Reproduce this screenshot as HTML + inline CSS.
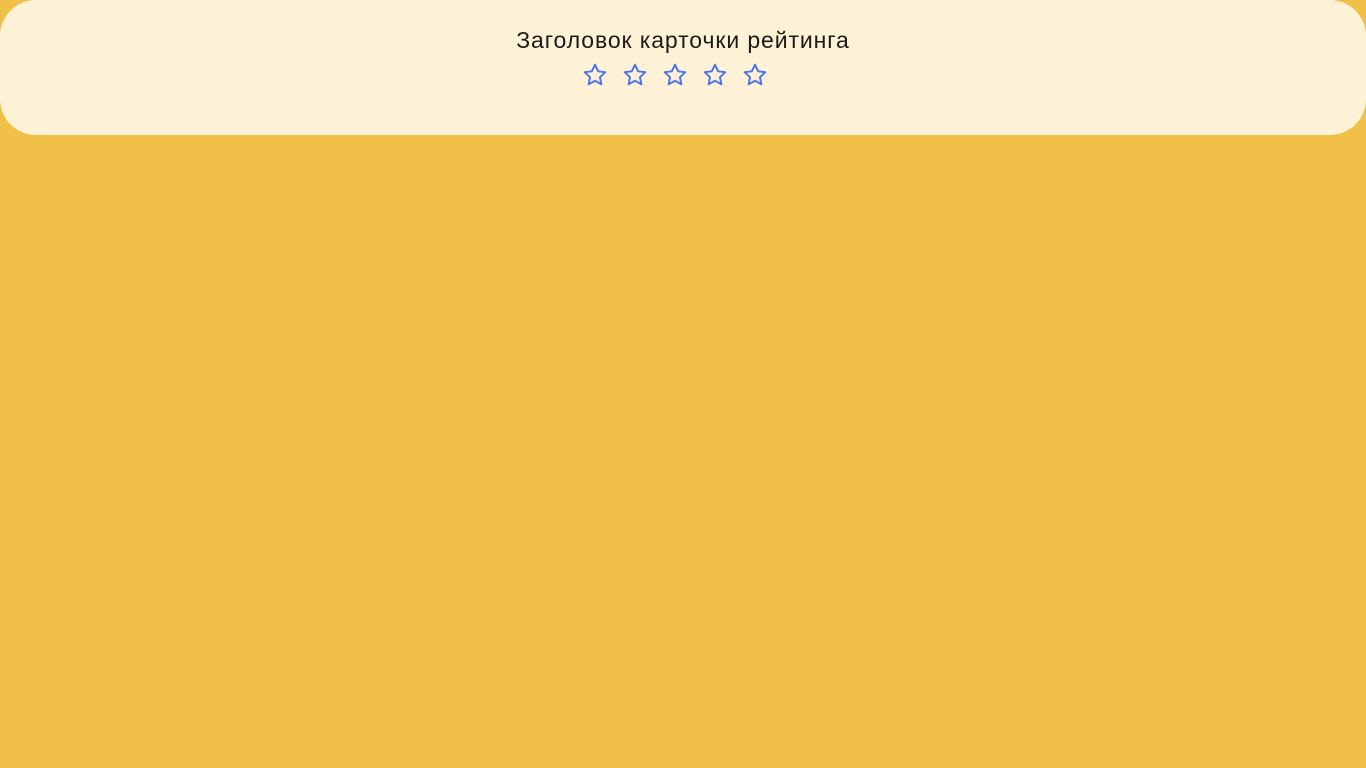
<!DOCTYPE html>
<html><head><meta charset="utf-8"><style>
html,body{margin:0;padding:0;width:1366px;height:768px;background:#f0c049;overflow:hidden}
.card{position:absolute;left:0;top:0;width:1366px;height:135px;background:#fef2d6;border-radius:36px}
.t{position:absolute;left:0;width:1366px;top:27px;text-align:center;font:23px "Liberation Sans","Noto Sans CJK SC",sans-serif;letter-spacing:0.9px;color:#1a1a1a}
svg{position:absolute;top:62px}
</style></head><body>
<div class="card">
<div class="t">Заголовок карточки рейтинга</div>
</div>
<svg style="left:582px" width="26" height="26" viewBox="0 0 24 24"><path d="M12 2.5l2.9 6.1 6.6.8-4.9 4.6 1.3 6.6L12 17.3l-5.9 3.3 1.3-6.6-4.9-4.6 6.6-.8z" fill="none" stroke="#4d74e8" stroke-width="1.8" stroke-linejoin="round"/></svg>
<svg style="left:622px" width="26" height="26" viewBox="0 0 24 24"><path d="M12 2.5l2.9 6.1 6.6.8-4.9 4.6 1.3 6.6L12 17.3l-5.9 3.3 1.3-6.6-4.9-4.6 6.6-.8z" fill="none" stroke="#4d74e8" stroke-width="1.8" stroke-linejoin="round"/></svg>
<svg style="left:662px" width="26" height="26" viewBox="0 0 24 24"><path d="M12 2.5l2.9 6.1 6.6.8-4.9 4.6 1.3 6.6L12 17.3l-5.9 3.3 1.3-6.6-4.9-4.6 6.6-.8z" fill="none" stroke="#4d74e8" stroke-width="1.8" stroke-linejoin="round"/></svg>
<svg style="left:702px" width="26" height="26" viewBox="0 0 24 24"><path d="M12 2.5l2.9 6.1 6.6.8-4.9 4.6 1.3 6.6L12 17.3l-5.9 3.3 1.3-6.6-4.9-4.6 6.6-.8z" fill="none" stroke="#4d74e8" stroke-width="1.8" stroke-linejoin="round"/></svg>
<svg style="left:742px" width="26" height="26" viewBox="0 0 24 24"><path d="M12 2.5l2.9 6.1 6.6.8-4.9 4.6 1.3 6.6L12 17.3l-5.9 3.3 1.3-6.6-4.9-4.6 6.6-.8z" fill="none" stroke="#4d74e8" stroke-width="1.8" stroke-linejoin="round"/></svg>
</body></html>
